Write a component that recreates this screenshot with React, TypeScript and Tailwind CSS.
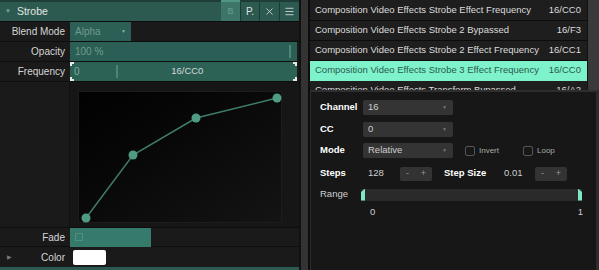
import { Menu, X } from 'lucide-react'

const LIST_ROWS = [
  { name: 'Composition Video Effects Strobe Effect Frequency', value: '16/CC0' },
  { name: 'Composition Video Effects Strobe 2 Bypassed', value: '16/F3' },
  { name: 'Composition Video Effects Strobe 2 Effect Frequency', value: '16/CC1' },
  { name: 'Composition Video Effects Strobe 3 Effect Frequency', value: '16/CC0', active: true },
  { name: 'Composition Video Effects Transform Bypassed', value: '16/A2' },
]

// curve points inside the envelope box (box-relative coords)
const POINTS = [
  [7, 126],
  [54, 63],
  [117, 26],
  [198, 6],
]

const font = { fontFamily: '"Liberation Sans", Arial, sans-serif' }

function Label({ children }: { children: React.ReactNode }) {
  return <div className="w-[70px] shrink-0 pr-[5px] text-right text-[#d6d6d6]">{children}</div>
}

function Dropdown({ value, w }: { value: string; w: string }) {
  return (
    <div className={`${w} h-[15px] bg-[#343434] rounded-[2px] flex items-center justify-between pl-[5px] pr-[6px] text-[#cfcfcf]`}>
      <span>{value}</span>
      <span className="text-[5px] text-[#777]">▼</span>
    </div>
  )
}

function StepButtons() {
  return (
    <div className="w-[32px] h-[14px] bg-[#333] rounded-[2px] flex items-center justify-around text-[#999] text-[9px]">
      <span>-</span>
      <span>+</span>
    </div>
  )
}

function LeftPanel() {
  return (
    <div className="w-[299px] h-full bg-[#1a1a1a] flex flex-col text-[10px]">
      {/* header */}
      <div className="h-[22px] flex bg-[#2c5a50] border-t-[2px] border-[#1e3d37] border-b border-b-[#0d0d0d]">
        <div className="flex-1 flex items-center gap-[6px] pl-[5px] text-[#e4e4e4] text-[10.5px]">
          <span className="text-[6px] text-[#7aa79c]">▼</span>
          Strobe
        </div>
        <div className="w-[19px] -mt-[2px] bg-[#3d7668] border-t-[2px] border-[#4f9484] flex items-center justify-center text-[#6e9e92] text-[9px]">B</div>
        <div className="w-[19px] border-l border-[#1d3b35] flex items-center justify-center text-[#e0e0e0] text-[10px]">P.</div>
        <div className="w-[20px] border-l border-[#1d3b35] flex items-center justify-center text-[#e0e0e0]">
          <X size={11} strokeWidth={1.8} />
        </div>
        <div className="w-[20px] border-l border-[#1d3b35] flex items-center justify-center text-[#e0e0e0]">
          <Menu size={11} strokeWidth={1.8} />
        </div>
      </div>

      {/* Blend Mode */}
      <div className="h-[20px] flex items-center border-b border-[#0e0e0e]">
        <Label>Blend Mode</Label>
        <div className="w-[61px] h-[19px] bg-[#2c5f55] flex items-center justify-between px-[5px] text-[#6f9b90]">
          <span>Alpha</span>
          <span className="text-[5px] text-[#8fb5ab]">▼</span>
        </div>
      </div>

      {/* Opacity */}
      <div className="h-[20px] flex items-center border-b border-[#0e0e0e]">
        <Label>Opacity</Label>
        <div className="w-[227px] h-[19px] bg-[#2b5e54] flex items-center px-[5px] text-[#6f9b90] relative">
          <span>100 %</span>
          <div className="absolute right-[6px] top-[3px] w-[2px] h-[13px] bg-[#4d877a]" />
        </div>
      </div>

      {/* Frequency */}
      <div className="h-[20px] flex items-center border-b border-[#0e0e0e]">
        <Label>Frequency</Label>
        <div className="w-[227px] h-[19px] bg-[#2c6156] flex items-center relative text-[#d8d8d8]">
          <div className="absolute left-0 top-0 w-[4px] h-[4px] border-l-2 border-t-2 border-[#e8e8e8]" />
          <div className="absolute left-0 bottom-0 w-[4px] h-[4px] border-l-2 border-b-2 border-[#e8e8e8]" />
          <div className="absolute right-0 top-0 w-[4px] h-[4px] border-r-2 border-t-2 border-[#e8e8e8]" />
          <div className="absolute right-0 bottom-0 w-[4px] h-[4px] border-r-2 border-b-2 border-[#e8e8e8]" />
          <span className="pl-[4px] text-[#7fa89e]">0</span>
          <div className="ml-[36px] w-[2px] h-[13px] bg-[#4a8577]" />
          <span className="flex-1 text-center text-[9.5px] pr-[40px]">16/CC0</span>
        </div>
      </div>

      {/* Envelope curve */}
      <div className="flex-1 flex">
        <div className="w-[70px] border-r border-[#0f0f0f]" />
        <div className="flex-1 pl-[8px] pr-[15px] pt-[9px] pb-[2px] bg-[#161616]">
          <div className="w-[204px] h-[132px] bg-gradient-to-br from-[#020202] via-[#0a0a0a] to-[#141414] border border-[#1c1c1c]">
            <svg width="204" height="132" className="overflow-visible">
              <polyline
                points={POINTS.map(p => p.join(',')).join(' ')}
                fill="none"
                stroke="#3e7c6c"
                strokeWidth="1.5"
              />
              {POINTS.map(([x, y]) => (
                <circle key={x} cx={x} cy={y} r="4.5" fill="#4f9b84" />
              ))}
            </svg>
          </div>
        </div>
      </div>

      {/* Fade */}
      <div className="h-[20px] flex items-center border-t border-[#0e0e0e] border-b border-b-[#0e0e0e]">
        <Label>Fade</Label>
        <div className="w-[81px] h-[19px] bg-[#367a6b] flex items-center pl-[5px]">
          <div className="w-[8px] h-[8px] border border-[#4e8d7f]" />
        </div>
      </div>

      {/* Color */}
      <div className="h-[20px] flex items-center">
        <div className="w-[70px] shrink-0 flex items-center justify-between pl-[7px] pr-[5px]">
          <span className="text-[6px] text-[#777]">▶</span>
          <span className="text-[#d6d6d6]">Color</span>
        </div>
        <div className="ml-[3px] w-[33px] h-[15px] bg-white rounded-[2px]" />
      </div>
      <div className="h-[3px] bg-[#2c5a50]" />
    </div>
  )
}

function RightPanel() {
  return (
    <div className="flex-1 h-full bg-[#141414] flex flex-col text-[9.5px]">
      {/* mapping list */}
      <div className="h-[90px] flex overflow-hidden">
        <div className="flex-1 bg-[#1e1e1e] pt-[1px]">
          {LIST_ROWS.map(row => (
            <div
              key={row.name}
              className={`h-[20px] shrink-0 flex items-center justify-between pl-[5px] pr-[6px] border-b ${
                row.active ? 'bg-[#7ef2cb] text-[#2a5a4d] border-[#7ef2cb]' : 'text-[#dcdcdc] border-[#0c0c0c]'
              }`}
            >
              <span>{row.name}</span>
              <span>{row.value}</span>
            </div>
          ))}
        </div>
        <div className="w-[12px] bg-[#3a3a3a] border-l border-[#111]" />
      </div>

      {/* mapping settings */}
      <div className="flex-1 border-t-[2px] border-[#2e2e2e] border-l border-l-[#2c2c2c] border-r-[3px] border-r-[#2c2c2c] bg-[#171717] pl-[9px] pt-[8px] text-[#d0d0d0]">
        <div className="flex items-center h-[15px] mb-[7px]">
          <span className="w-[43px] font-bold text-white">Channel</span>
          <Dropdown value="16" w="w-[90px]" />
        </div>
        <div className="flex items-center h-[15px] mb-[6px]">
          <span className="w-[43px] font-bold text-white">CC</span>
          <Dropdown value="0" w="w-[90px]" />
        </div>
        <div className="flex items-center h-[15px] mb-[8px]">
          <span className="w-[43px] font-bold text-white">Mode</span>
          <Dropdown value="Relative" w="w-[90px]" />
          <div className="ml-[12px] w-[10px] h-[10px] rounded-[2px] border border-[#555]" />
          <span className="ml-[4px] text-[8px] text-[#aaa]">Invert</span>
          <div className="ml-[24px] w-[10px] h-[10px] rounded-[2px] border border-[#555]" />
          <span className="ml-[4px] text-[8px] text-[#aaa]">Loop</span>
        </div>
        <div className="flex items-center h-[15px] mb-[7px]">
          <span className="w-[48px] font-bold text-white">Steps</span>
          <span className="w-[32px] text-[#cfcfcf]">128</span>
          <StepButtons />
          <span className="ml-[12px] w-[60px] font-bold text-white">Step Size</span>
          <span className="w-[31px] text-[#cfcfcf]">0.01</span>
          <StepButtons />
        </div>
        <div className="flex items-center h-[13px]">
          <span className="w-[41px] text-[#d0d0d0]">Range</span>
          <div className="w-[221px] h-[12px] bg-[#2a2a2a] flex justify-between">
            <div className="w-[4px] h-[12px] bg-[#7de8c4] [clip-path:polygon(0_30%,100%_0,100%_100%,0_100%)]" />
            <div className="w-[4px] h-[12px] bg-[#7de8c4] [clip-path:polygon(0_0,100%_30%,100%_100%,0_100%)]" />
          </div>
        </div>
        <div className="flex justify-between w-[213px] ml-[50px] mt-[4px] text-[#cfcfcf]">
          <span>0</span>
          <span>1</span>
        </div>
      </div>
    </div>
  )
}

export default function App() {
  return (
    <div className="w-[599px] h-[270px] flex bg-[#2f2f2f] overflow-hidden" style={font}>
      <LeftPanel />
      <div className="w-[11px] h-full bg-[#333] border-l-2 border-[#111] border-r-2 border-r-[#0d0d0d]" />
      <RightPanel />
    </div>
  )
}
